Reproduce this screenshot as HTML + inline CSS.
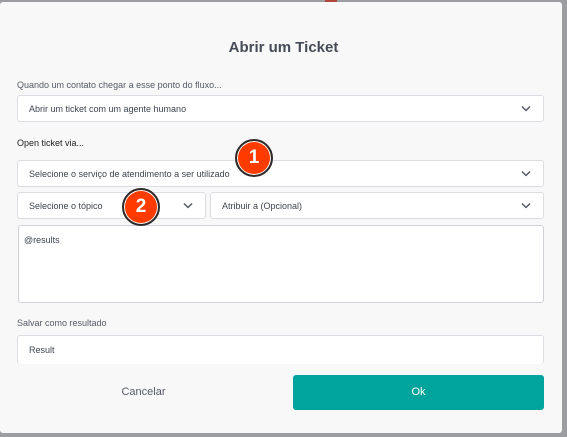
<!DOCTYPE html>
<html><head><meta charset="utf-8"><style>
*{box-sizing:border-box;margin:0;padding:0}
body{width:567px;height:437px;background:#9c9da0;position:relative;overflow:hidden;font-family:"Liberation Sans",sans-serif;}
.modal{position:absolute;left:0;top:2px;width:562px;height:431px;background:#f8f8f8;border-radius:3px}
.t{position:absolute;font-size:9px;color:#555a66}
.box{position:absolute;background:#fff;border:1px solid #dcdde3;border-radius:3px}
.sel{font-size:9px;color:#3f4450;padding-left:11px;display:flex;align-items:center}
.chev{position:absolute;right:12px;top:50%;margin-top:-4px}
.badge{position:absolute;width:38px;height:38px;border-radius:50%;background:#ff3b00;border:2px solid #2a2a2a;color:#fff;font-weight:bold;font-size:19px;text-align:center;line-height:34px;box-shadow:0 0 0 1px #fff inset}
</style></head><body>
<div style="position:absolute;left:325px;top:0;width:12px;height:2px;background:#b0463a"></div>
<div class="modal"></div>
<div class="t" style="left:0;width:567px;text-align:center;top:39px;font-size:15px;font-weight:bold;color:#464b57">Abrir um Ticket</div>
<div class="t" style="left:17px;top:80px">Quando um contato chegar a esse ponto do fluxo...</div>
<div class="box sel" style="left:17px;top:95px;width:527px;height:27px">Abrir um ticket com um agente humano<svg class="chev" width="10" height="7" viewBox="0 0 10 7"><path d="M1 1.5l4 4 4-4" fill="none" stroke="#555a66" stroke-width="1.5"/></svg></div>
<div class="t" style="left:17px;top:138px;color:#222">Open ticket via...</div>
<div class="box sel" style="left:17px;top:160px;width:527px;height:27px">Selecione o serviço de atendimento a ser utilizado<svg class="chev" width="10" height="7" viewBox="0 0 10 7"><path d="M1 1.5l4 4 4-4" fill="none" stroke="#555a66" stroke-width="1.5"/></svg></div>
<div class="box sel" style="left:17px;top:192px;width:189px;height:27px">Selecione o tópico<svg class="chev" width="10" height="7" viewBox="0 0 10 7"><path d="M1 1.5l4 4 4-4" fill="none" stroke="#555a66" stroke-width="1.5"/></svg></div>
<div class="box sel" style="left:210px;top:192px;width:334px;height:27px">Atribuir a (Opcional)<svg class="chev" width="10" height="7" viewBox="0 0 10 7"><path d="M1 1.5l4 4 4-4" fill="none" stroke="#555a66" stroke-width="1.5"/></svg></div>
<div class="box" style="left:18px;top:225px;width:526px;height:78px;border-color:#cfd0d8"><div class="t" style="left:5px;top:9px;color:#3f4450">@results</div></div>
<div class="t" style="left:17px;top:318px">Salvar como resultado</div>
<div class="box sel" style="left:17px;top:335px;width:527px;height:29px;border-bottom:none">Result</div>
<div class="t" style="left:0;width:287px;text-align:center;top:386px;font-size:11px;color:#555a66">Cancelar</div>
<div style="position:absolute;left:293px;top:375px;width:251px;height:35px;background:#00a49c;border-radius:3px;color:#fff;font-size:11px;text-align:center;line-height:35px">Ok</div>
<div class="badge" style="left:235px;top:139px">1</div>
<div class="badge" style="left:122px;top:188px">2</div>
</body></html>
